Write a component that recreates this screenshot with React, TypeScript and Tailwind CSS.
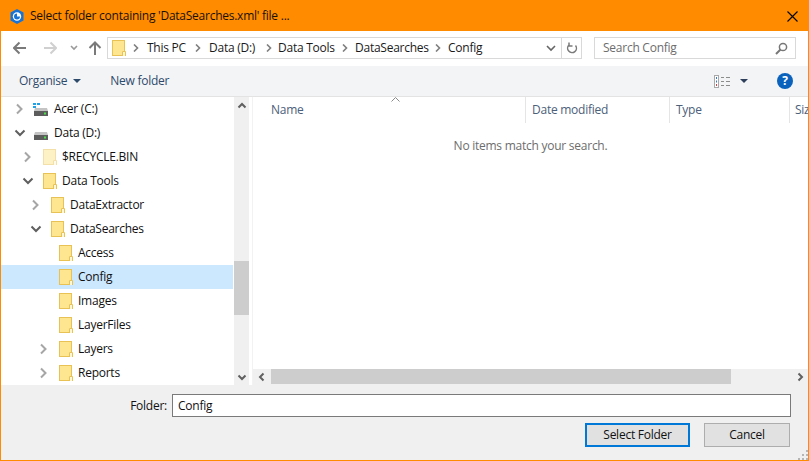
import React from "react";

const Chevron = ({ dir, color = "#a6a6a6", w = 2 }: { dir: "right" | "down"; color?: string; w?: number }) => {
  const d = { right: "M3 1.5 L7.5 6 L3 10.5", down: "M1.5 3.5 L6 8 L10.5 3.5" }[dir];
  return (
    <svg width="12" height="12" viewBox="0 0 12 12" fill="none">
      <path d={d} stroke={color} strokeWidth={w} />
    </svg>
  );
};

const SmallChevron = ({ dir }: { dir: "right" | "down" | "up" | "left" }) => {
  const d = {
    right: "M4.5 2.5 L8 6 L4.5 9.5",
    left: "M7.5 2.5 L4 6 L7.5 9.5",
    down: "M2.5 4.5 L6 8 L9.5 4.5",
    up: "M2.5 7.5 L6 4 L9.5 7.5",
  }[dir];
  return (
    <svg width="12" height="12" viewBox="0 0 12 12" fill="none">
      <path d={d} stroke="#606060" strokeWidth="2" />
    </svg>
  );
};

const Folder = ({ faded = false, className = "" }: { faded?: boolean; className?: string }) => (
  <svg width="14" height="16" viewBox="0 0 14 16" className={className} opacity={faded ? 0.5 : 1}>
    <rect x="0.5" y="0.5" width="12" height="15" fill="#fde68f" stroke="#e8c254" />
    <rect x="10" y="11" width="3" height="5" fill="#fff7d6" />
    <path d="M10.5 16 V11.5 H13.5 V16" fill="none" stroke="#e8c254" />
  </svg>
);

const Drive = ({ win = false }: { win?: boolean }) => (
  <svg width="16" height="16" viewBox="0 0 16 16">
    {win && (
      <g fill="#1fa2e8">
        <rect x="0" y="2" width="3" height="2" />
        <rect x="4" y="2" width="3" height="2" />
        <rect x="0" y="5" width="3" height="2" />
      </g>
    )}
    <path d="M2 7 L14 7 L15 10 L1 10 Z" fill="#c4c4c4" />
    <rect x="1" y="10" width="14" height="5" fill="#5c5c5c" />
    <rect x="11" y="11.5" width="2" height="2" fill="#4be04b" />
  </svg>
);

const rows: { label: string; level: number; chev?: "right" | "down"; icon: "win" | "drive" | "folder" | "faded"; sel?: boolean }[] = [
  { label: "Acer (C:)", level: 0, chev: "right", icon: "win" },
  { label: "Data (D:)", level: 0, chev: "down", icon: "drive" },
  { label: "$RECYCLE.BIN", level: 1, chev: "right", icon: "faded" },
  { label: "Data Tools", level: 1, chev: "down", icon: "folder" },
  { label: "DataExtractor", level: 2, chev: "right", icon: "folder" },
  { label: "DataSearches", level: 2, chev: "down", icon: "folder" },
  { label: "Access", level: 3, icon: "folder" },
  { label: "Config", level: 3, icon: "folder", sel: true },
  { label: "Images", level: 3, icon: "folder" },
  { label: "LayerFiles", level: 3, icon: "folder" },
  { label: "Layers", level: 3, chev: "right", icon: "folder" },
  { label: "Reports", level: 3, chev: "right", icon: "folder" },
];

const levelClass = ["pl-[14px]", "pl-[22px]", "pl-[30px]", "pl-[38px]"];

const Sep = () => (
  <svg width="6" height="8" viewBox="0 0 6 8" className="shrink-0">
    <path d="M1 0.5 L4.5 4 L1 7.5" fill="none" stroke="#7f7f7f" strokeWidth="1.6" />
  </svg>
);

export default function App() {
  return (
    <div
      className="w-[809px] h-[461px] flex flex-col bg-[#f0f0f0] border border-[#ff8c00] overflow-hidden text-[12px] text-[#1a1a1a]"
      style={{ fontFamily: '"Open Sans", "Noto Sans", sans-serif', letterSpacing: "-0.25px" }}
    >
      {/* Title bar */}
      <div className="h-[30px] shrink-0 bg-[#ff8c00] flex items-center pl-[9px] pr-[10px] text-[#1a1000]">
        <svg width="14" height="15" viewBox="0 0 14 15">
          <path d="M7 0 L13.5 3.5 V11.5 L7 15 L0.5 11.5 V3.5 Z" fill="#1773d6" />
          <circle cx="7" cy="7.5" r="4.2" fill="#fff" />
          <path d="M7 4.5 A3 3 0 1 0 10 7.5 H7 Z" fill="#1773d6" />
        </svg>
        <span className="ml-[6px]">Select folder containing 'DataSearches.xml' file ...</span>
        <svg width="11" height="11" viewBox="0 0 11 11" className="ml-auto">
          <path d="M0.5 0.5 L10.5 10.5 M10.5 0.5 L0.5 10.5" stroke="#000" strokeWidth="1.1" />
        </svg>
      </div>

      {/* Address bar */}
      <div className="h-[35px] shrink-0 bg-white flex items-center pl-[12px] pr-[12px] pb-[1px]">
        <svg width="14" height="14" viewBox="0 0 14 14">
          <path d="M6.5 1.5 L1 7 L6.5 12.5 M1.5 7 H13" fill="none" stroke="#7a7a7a" strokeWidth="2" />
        </svg>
        <svg width="14" height="14" viewBox="0 0 14 14" className="ml-[16px]">
          <path d="M7.5 1.5 L13 7 L7.5 12.5 M12.5 7 H1" fill="none" stroke="#d0d0d0" strokeWidth="2" />
        </svg>
        <svg width="8" height="6" viewBox="0 0 8 6" className="ml-[13px]">
          <path d="M1 1 L4 4 L7 1" fill="none" stroke="#9a9a9a" strokeWidth="1.6" />
        </svg>
        <svg width="14" height="14" viewBox="0 0 14 14" className="ml-[10px]">
          <path d="M1.5 7 L7 1.5 L12.5 7 M7 2 V14" fill="none" stroke="#7a7a7a" strokeWidth="2" />
        </svg>
        <div className="ml-[5px] w-[475px] h-[22px] border border-[#d9d9d9] flex items-center text-[#1a1a1a]">
          <Folder className="ml-[4px] shrink-0" />
          <div className="ml-[7px]"><Sep /></div>
          <span className="ml-[8px] w-[48px]">This PC</span>
          <Sep />
          <span className="ml-[8px] w-[57px]">Data (D:)</span>
          <Sep />
          <span className="ml-[6px] w-[64px]">Data Tools</span>
          <Sep />
          <span className="ml-[7px] w-[80px]">DataSearches</span>
          <Sep />
          <span className="ml-[7px]">Config</span>
          <svg width="10" height="7" viewBox="0 0 10 7" className="ml-auto mr-[5px]">
            <path d="M1 1 L5 5 L9 1" fill="none" stroke="#666" strokeWidth="1.6" />
          </svg>
          <div className="w-[20px] h-full border-l border-[#d9d9d9] flex items-center justify-center">
            <svg width="12" height="13" viewBox="0 0 12 13">
              <path d="M9.5 3.5 A4.4 4.4 0 1 1 3 3 M3 0.5 V4 H6.5" fill="none" stroke="#7a7a7a" strokeWidth="1.5" />
            </svg>
          </div>
        </div>
        <div className="ml-[12px] w-[202px] h-[22px] border border-[#d9d9d9] flex items-center pl-[8px] pr-[7px] text-[#6d6d6d]">
          <span>Search Config</span>
          <svg width="13" height="13" viewBox="0 0 13 13" className="ml-auto">
            <circle cx="8" cy="5" r="3.6" fill="none" stroke="#777" strokeWidth="1.5" />
            <path d="M5.5 7.5 L1 12" stroke="#777" strokeWidth="2" />
          </svg>
        </div>
      </div>

      {/* Toolbar */}
      <div className="h-[31px] shrink-0 bg-[#f3f4f6] border-b border-[#e3e3e3] flex items-center pl-[18px] pr-[15px] text-[#2e4a6b]">
        <span>Organise</span>
        <svg width="8" height="4" viewBox="0 0 8 4" className="ml-[6px]"><path d="M0 0 H8 L4 4 Z" fill="#2e4a6b" /></svg>
        <span className="ml-[29px]">New folder</span>
        <svg width="17" height="13" viewBox="0 0 17 13" className="ml-auto">
          <rect x="0.5" y="0.5" width="4" height="12" fill="#fff" stroke="#a8a8a8" />
          <rect x="2" y="2" width="1" height="2" fill="#3579c7" />
          <rect x="2" y="5.5" width="1" height="2" fill="#3579c7" />
          <rect x="2" y="9" width="1" height="2" fill="#d04040" />
          <path d="M7 2.5 H10 M12 2.5 H16 M7 6.5 H10 M12 6.5 H16 M7 10.5 H10 M12 10.5 H16" stroke="#8c8c8c" />
        </svg>
        <svg width="8" height="4" viewBox="0 0 8 4" className="ml-[9px]"><path d="M0 0 H8 L4 4 Z" fill="#2e3f5c" /></svg>
        <div className="ml-[29px] w-[16px] h-[16px] rounded-full bg-[#0a62bd] flex items-center justify-center text-white text-[12px] font-bold">?</div>
      </div>

      {/* Main */}
      <div className="h-[288px] shrink-0 bg-white flex">
        <div className="w-[232px] h-full overflow-hidden shrink-0">
          {rows.map((r) => {
            const isDrive = r.icon === "win" || r.icon === "drive";
            return (
              <div key={r.label} className={`h-[24px] flex items-center ${levelClass[r.level]} ${r.sel ? "bg-[#cce8ff]" : ""}`}>
                <div className="w-[12px] h-[12px] shrink-0 -translate-x-[1px]">
                  {r.chev && <Chevron dir={r.chev} color={r.chev === "down" ? "#5f5f5f" : "#a6a6a6"} />}
                </div>
                {isDrive ? (
                  <div className="ml-[6px] shrink-0"><Drive win={r.icon === "win"} /></div>
                ) : (
                  <Folder faded={r.icon === "faded"} className="ml-[8px] shrink-0" />
                )}
                <span className={`text-[#111] ${isDrive ? "ml-[5px]" : "ml-[5px]"}`}>{r.label}</span>
              </div>
            );
          })}
        </div>
        {/* Tree scrollbar */}
        <div className="w-[15px] ml-[1px] h-full bg-[#f0f0f0] shrink-0 flex flex-col items-center">
          <div className="h-[18px] flex items-center"><SmallChevron dir="up" /></div>
          <div className="h-[146px]" />
          <div className="h-[54px] w-full bg-[#cdcdcd]" />
          <div className="flex-1" />
          <div className="h-[17px] flex items-center"><SmallChevron dir="down" /></div>
        </div>
        {/* List */}
        <div className="flex-1 min-w-0 ml-[3px] border-l border-[#f2f2f2] flex flex-col">
          <div className="h-[26px] shrink-0 flex items-center text-[#4c607a]">
            <div className="relative w-[273px] h-full pl-[18px] flex items-center border-r border-[#e5e5e5]">
              Name
              <svg width="9" height="5" viewBox="0 0 9 5" className="absolute left-[138px] top-0">
                <path d="M0.5 4.5 L4.5 0.5 L8.5 4.5" fill="none" stroke="#8a8a8a" />
              </svg>
            </div>
            <div className="w-[144px] h-full pl-[6px] flex items-center border-r border-[#e5e5e5]">Date modified</div>
            <div className="w-[120px] h-full pl-[6px] flex items-center border-r border-[#e5e5e5]">Type</div>
            <div className="pl-[5px] flex-1 overflow-hidden">Size</div>
          </div>
          <div className="h-[32px] shrink-0 flex items-end justify-center text-[#6d6d6d]">No items match your search.</div>
          <div className="flex-1" />
          <div className="h-[16px] shrink-0 bg-[#f0f0f0] flex items-center">
            <div className="w-[18px] flex justify-center"><SmallChevron dir="left" /></div>
            <div className="w-[460px] h-[15px] self-start bg-[#cdcdcd]" />
            <div className="flex-1" />
            <div className="w-[17px] flex justify-center"><SmallChevron dir="right" /></div>
          </div>
        </div>
      </div>

      {/* Bottom */}
      <div className="flex-1 flex flex-col pr-[17px] relative">
        <div className="mt-[9px] h-[23px] flex items-center justify-end">
          <span className="mr-[5px] text-[#111]">Folder:</span>
          <div className="w-[619px] h-[23px] border border-[#7a7a7a] bg-white flex items-center pl-[5px] text-[#111]">Config</div>
        </div>
        <div className="mt-[6px] pr-[1px] flex justify-end gap-[14px]">
          <div className="w-[105px] h-[24px] border-2 border-[#0078d7] bg-[#e1e1e1] flex items-center justify-center text-[#111]">Select Folder</div>
          <div className="w-[86px] h-[24px] border border-[#adadad] bg-[#e1e1e1] flex items-center justify-center text-[#111]">Cancel</div>
        </div>
        <svg width="10" height="10" viewBox="0 0 10 10" className="absolute right-0 bottom-0">
          <g fill="#b5b5b5">
            <rect x="8" y="0" width="2" height="2" />
            <rect x="4" y="4" width="2" height="2" />
            <rect x="8" y="4" width="2" height="2" />
            <rect x="0" y="8" width="2" height="2" />
            <rect x="4" y="8" width="2" height="2" />
            <rect x="8" y="8" width="2" height="2" />
          </g>
        </svg>
      </div>
    </div>
  );
}
